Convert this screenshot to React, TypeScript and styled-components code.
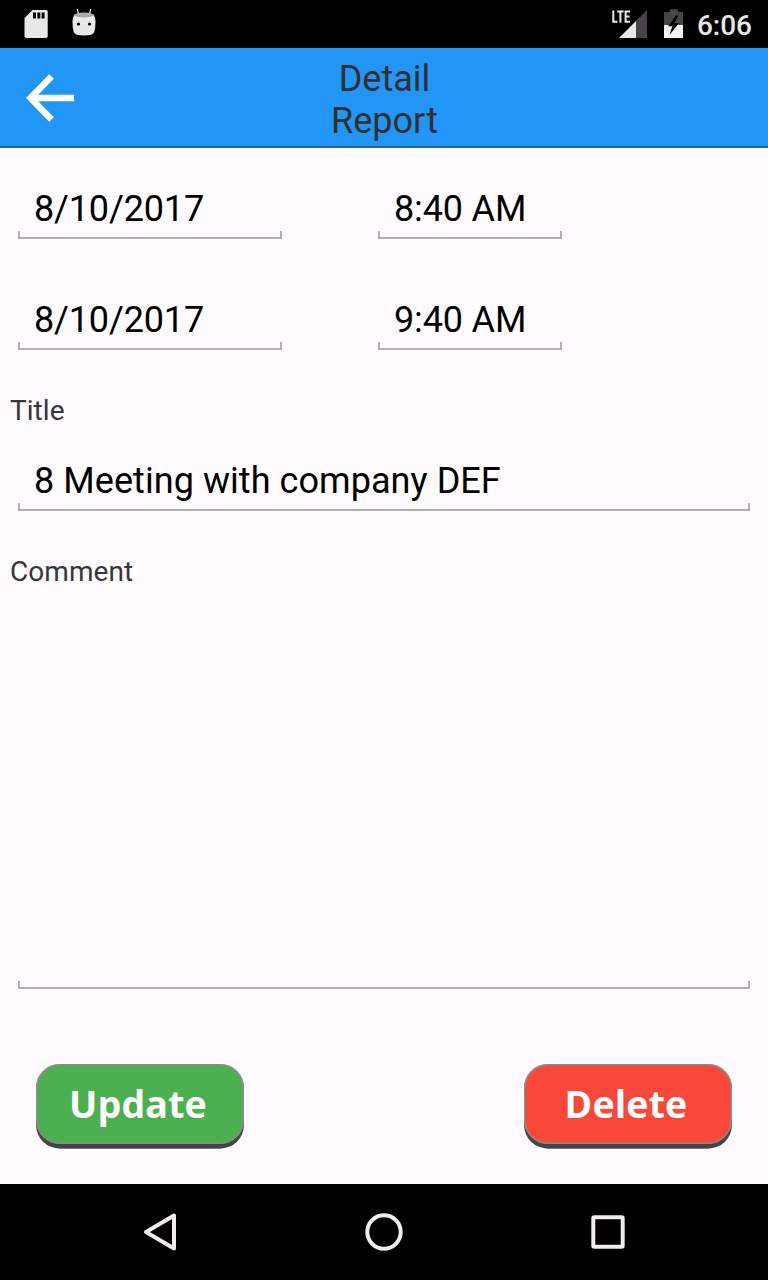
import React from "react";
import styled, { createGlobalStyle } from "styled-components";

const GlobalStyle = createGlobalStyle`
  * { box-sizing: border-box; }
  body { margin: 0; background: #fffbff; }
`;

const Screen = styled.div`
  display: flex;
  flex-direction: column;
  width: 768px;
  height: 1280px;
  overflow: hidden;
  background: #fffbff;
  font-family: Roboto, sans-serif;
`;

const StatusBar = styled.div`
  display: flex;
  align-items: center;
  justify-content: space-between;
  height: 48px;
  flex: none;
  padding: 0 16px 0 24px;
  background: #000;
`;

const StatusGroup = styled.div<{ $gap: number }>`
  display: flex;
  align-items: center;
  gap: ${(p) => p.$gap}px;
  height: 48px;
`;

const Clock = styled.span`
  color: #e8e8e8;
  font-size: 28px;
  font-weight: 500;
  line-height: 34px;
  padding-top: 4px;
  margin-left: -3px;
`;

const Icon = styled.svg`
  display: block;
  flex: none;
`;

const Header = styled.header`
  display: grid;
  grid-template-columns: 100px 1fr 100px;
  align-items: center;
  height: 100px;
  flex: none;
  background: #2196f6;
  border-bottom: 2px solid #35618f;
`;

const BackButton = styled.button`
  display: flex;
  align-items: center;
  justify-content: center;
  height: 98px;
  padding: 2px 0 0;
  border: 0;
  background: none;
`;

const HeaderTitle = styled.h1`
  margin: 0;
  padding: 5px 0 0 1px;
  color: #303030;
  font-size: 36px;
  font-weight: 400;
  line-height: 42px;
  text-align: center;
`;

const Form = styled.main`
  display: flex;
  flex-direction: column;
  flex: 1;
  padding: 40px 18px 0;
`;

const FieldRow = styled.div`
  display: flex;
  gap: 96px;
  margin-bottom: 60px;

  & + & { margin-bottom: 44px; }
`;

const Field = styled.div<{ $width: number; $height?: number }>`
  display: flex;
  flex-direction: column;
  justify-content: space-between;
  width: ${(p) => p.$width}px;
  height: ${(p) => p.$height ?? 51}px;
`;

const FieldText = styled.span<{ $tracking?: number }>`
  padding-left: 16px;
  color: #000;
  font-size: 36px;
  line-height: 42px;
  letter-spacing: ${(p) => p.$tracking ?? -0.15}px;
  white-space: nowrap;
`;

const FieldLine = styled.div`
  height: 8px;
  border: solid #b2afb2;
  border-width: 0 2px 2px;
`;

const Label = styled.label<{ $gap: number }>`
  margin: 0 0 ${(p) => p.$gap}px -8px;
  color: #38363a;
  font-size: 28px;
  line-height: 33px;
  letter-spacing: 0.05px;

  ${Field} + & { margin-top: 44px; }
`;

const Actions = styled.div`
  display: flex;
  justify-content: space-between;
  margin-top: 75px;
  padding: 0 18px;
`;

const ActionButton = styled.button<{ $color: string }>`
  width: 208px;
  height: 80px;
  padding: 0 4px 0 0;
  border: 0;
  border-radius: 24px;
  background: ${(p) => p.$color};
  box-shadow: inset 0 0 0 1.5px #8d8b89, 0 4.700px 0 #444644;
  color: #fff;
  font-family: "Open Sans", "Noto Sans", sans-serif;
  font-size: 37.5px;
  font-weight: 700;
  line-height: 50px;
  letter-spacing: 0.15px;
`;

const NavBar = styled.nav`
  display: flex;
  justify-content: space-between;
  align-items: center;
  height: 96px;
  flex: none;
  padding: 0 136px;
  background: #000;
`;

const SdCardIcon = () => (
  <Icon width="24" height="30" viewBox="24 9 24 30">
    <path d="M32.5 10H46q1.7 0 1.7 1.7V36.3q0 1.7-1.7 1.7H26.200q-1.700 0-1.700-1.700V18z" fill="#e8e8e8" />
    <path d="M33 12.500h3v6h-3zM37.300 12.500h3v6h-3zM41.600 12.500h3v6h-3z" fill="#000" />
  </Icon>
);

const DebugIcon = () => (
  <Icon width="24" height="30" viewBox="72 8 24 30">
    <path d="M77.300 7.500l1.200 6M90.700 7.500l-1.200 6" stroke="#e8e8e8" strokeWidth="1.300" />
    <path d="M74.500 13.500Q84 10.500 93.500 13.500Q95.500 16 95.500 21Q95.500 27 94.300 31Q93.200 34.500 84 34.500Q74.800 34.500 73.700 31Q72.500 27 72.500 21Q72.500 16 74.500 13.500z" fill="#e8e8e8" />
    <ellipse cx="84" cy="14" rx="9.500" ry="2.400" fill="#aaa" />
    <circle cx="78.500" cy="23" r="1.600" fill="#000" />
    <circle cx="89.500" cy="23" r="1.600" fill="#000" />
  </Icon>
);

const SignalIcon = () => (
  <Icon width="37" height="30" viewBox="611 9 37 30">
    <path d="M647 10V38H636V21z" fill="#49444a" />
    <path d="M619 38L636 21V38z" fill="#e8e8e8" />
    <path
      d="M613.300 10.500V21.800H617.500M617.200 11.500H623.600M620.400 11.500V22.700M630 11.500H625.600V21.800H630M625.600 16.500H629.500"
      fill="none"
      stroke="#e8e8e8"
      strokeWidth="2"
    />
  </Icon>
);

const BatteryIcon = () => (
  <Icon width="20" height="30" viewBox="664 9 20 30">
    <path d="M664 12H669.700V9.300H678V12H683V25H664z" fill="#49444a" />
    <path d="M664 25H683V38H664z" fill="#f2f2f2" />
    <path d="M676 15.500L668 26.300H672.300L669.500 35L679 23H674.300L678.500 15.500z" fill="#000" />
  </Icon>
);

const BackArrowIcon = () => (
  <Icon width="52" height="52" viewBox="24 72 52 52" fill="none" stroke="#fff" strokeWidth="6.500">
    <path d="M74 98H32M51.500 76.500L30.500 98L51.500 119.500" />
    <path d="M27 98L33 92V104zM32 94.500H38V101.500H32z" fill="#fff" stroke="none" />
  </Icon>
);

type TextFieldProps = { value?: string; width: number; height?: number; tracking?: number };

const TextField = ({ value, width, height, tracking }: TextFieldProps) => (
  <Field $width={width} $height={height}>
    <FieldText $tracking={tracking}>{value}</FieldText>
    <FieldLine />
  </Field>
);

export default function App() {
  return (
    <Screen>
      <GlobalStyle />
      <StatusBar>
        <StatusGroup $gap={24}>
          <SdCardIcon />
          <DebugIcon />
        </StatusGroup>
        <StatusGroup $gap={16}>
          <SignalIcon />
          <BatteryIcon />
          <Clock>6:06</Clock>
        </StatusGroup>
      </StatusBar>
      <Header>
        <BackButton aria-label="Back">
          <BackArrowIcon />
        </BackButton>
        <HeaderTitle>
          Detail
          <br />
          Report
        </HeaderTitle>
      </Header>
      <Form>
        <FieldRow>
          <TextField value="8/10/2017" width={264} />
          <TextField value="8:40 AM" width={184} />
        </FieldRow>
        <FieldRow>
          <TextField value="8/10/2017" width={264} />
          <TextField value="9:40 AM" width={184} />
        </FieldRow>
        <Label $gap={33}>Title</Label>
        <TextField value="8 Meeting with company DEF" width={732} tracking={0.06} />
        <Label $gap={0}>Comment</Label>
        <TextField width={732} height={401} />
        <Actions>
          <ActionButton $color="#4caf50">Update</ActionButton>
          <ActionButton $color="#f9473a">Delete</ActionButton>
        </Actions>
      </Form>
      <NavBar>
        <Icon width="48" height="48" viewBox="136 1208 48 48" fill="none" stroke="#f0ecf0" strokeWidth="4" strokeLinejoin="round">
          <path d="M174 1215.500V1248.500L146 1232z" />
        </Icon>
        <Icon width="48" height="48" viewBox="360 1208 48 48" fill="none" stroke="#f0ecf0" strokeWidth="4">
          <circle cx="384" cy="1232" r="16.700" />
        </Icon>
        <Icon width="48" height="48" viewBox="584 1208 48 48" fill="none" stroke="#f0ecf0" strokeWidth="4">
          <rect x="593.300" y="1217.300" width="29.400" height="29.400" rx="1" />
        </Icon>
      </NavBar>
    </Screen>
  );
}
